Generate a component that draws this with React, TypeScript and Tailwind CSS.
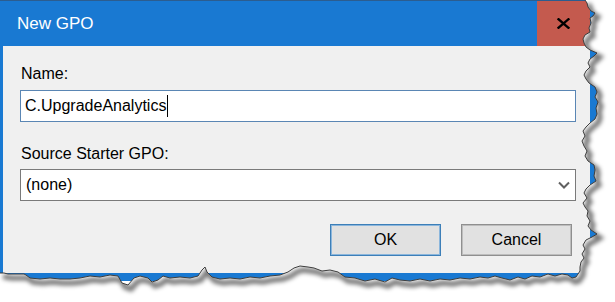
import React from 'react';

// torn-paper edge, traced by eye from the screenshot
const rightEdge: [number, number][] = [
  [585, 0], [587, 3], [588, 7], [591, 11], [595, 13], [593, 16], [590, 18], [591, 23], [589, 28], [590, 32],
  [585, 35], [583, 39], [584, 43], [586, 47], [590, 50], [597, 53], [594, 56], [590, 59], [588, 63], [590, 67],
  [586, 71], [584, 75], [586, 79], [589, 83], [595, 87], [597, 92], [595, 97], [598, 102], [596, 108], [597, 114],
  [595, 119], [590, 123], [586, 127], [583, 131], [585, 136], [582, 141], [584, 146], [587, 151], [585, 156], [588, 161],
  [594, 165], [595, 170], [594, 176], [596, 181], [590, 185], [586, 189], [584, 193], [587, 198], [583, 203], [585, 207],
  [588, 211], [587, 216], [590, 221], [588, 226], [591, 230], [597, 234], [592, 237], [586, 240], [583, 245], [585, 249],
  [582, 254], [584, 258], [581, 262], [580, 267], [580, 271],
];

const bottomEdge: [number, number][] = [
  [578, 274], [576, 277], [572, 278], [568, 275], [562, 274], [555, 276], [548, 274], [540, 277], [532, 276], [525, 279],
  [518, 277], [510, 280], [502, 278], [495, 276], [488, 278], [480, 277], [470, 279], [460, 278], [450, 280], [440, 279],
  [430, 281], [420, 279], [410, 281], [400, 280], [392, 278], [385, 282], [375, 279], [365, 281], [355, 278], [345, 277],
  [338, 272], [330, 270], [322, 271], [314, 268], [308, 267], [300, 266], [294, 268], [288, 272], [280, 275], [270, 276],
  [260, 278], [250, 277], [240, 279], [230, 278], [220, 279], [212, 277], [207, 272], [205, 267], [202, 270], [198, 276],
  [190, 278], [180, 277], [170, 278], [163, 276], [158, 280], [152, 282], [148, 278], [140, 276], [134, 278], [128, 285],
  [122, 283], [118, 276], [110, 275], [100, 277], [90, 276], [80, 278], [70, 279], [60, 279], [50, 278], [40, 279],
  [30, 278], [26, 275], [24, 274], [15, 274], [8, 274], [4, 273], [0, 273],
];

const tearPts = [...rightEdge, ...bottomEdge].map(([x, y]) => `${x},${y}`).join(' ');
const outsidePts = `${tearPts} 0,302 615,302 615,0`;

const TornEdge: React.FC = () => (
  <svg className="pointer-events-none absolute inset-0" width={615} height={302} viewBox="0 0 615 302">
    <defs>
      <clipPath id="outside">
        <polygon points={outsidePts} />
      </clipPath>
      <filter id="blur" x="-10%" y="-10%" width="120%" height="120%">
        <feGaussianBlur stdDeviation="2.2" />
      </filter>
    </defs>
    <polygon points={outsidePts} fill="#ffffff" />
    <g clipPath="url(#outside)">
      <polyline
        points={tearPts}
        transform="translate(3 4)"
        fill="none"
        stroke="#000"
        strokeOpacity={0.55}
        strokeWidth={5}
        filter="url(#blur)"
      />
    </g>
    <polyline points={tearPts} fill="none" stroke="#3d3d3d" strokeWidth={1} />
  </svg>
);

export default function App() {
  return (
    <div className="relative h-[302px] w-[615px] overflow-hidden bg-white font-['Liberation_Sans',Arial,sans-serif]">
      <div className="flex h-[281px] w-[598px] flex-col bg-[#1979d2]">
        {/* Title bar */}
        <div className="flex h-[46px] items-center border-t border-[#2c5d8f]">
          <span className="pl-[17px] text-[17px] text-white">New GPO</span>
          <div className="ml-auto mr-[8px] flex h-full w-[53px] items-center justify-center bg-[#c45a4e]">
            <svg width="13" height="11" viewBox="0 0 13 11">
              <path d="M1.5 1.2 L11.5 9.8 M11.5 1.2 L1.5 9.8" stroke="#000" strokeWidth={2.3} strokeLinecap="square" />
            </svg>
          </div>
        </div>

        {/* Body */}
        <div className="mb-[8px] ml-[3px] mr-[8px] flex flex-1 flex-col bg-[#f0f0f0] pl-[17px] pr-[14px] pt-[19px] text-[16px] leading-[18px] text-black">
          <label className="pl-[1px]">Name:</label>
          <div className="mt-[7px] flex h-[32px] items-center border border-[#5a86b4] bg-white pl-[4px]">
            <span>C.UpgradeAnalytics</span>
            <span className="ml-[1px] inline-block h-[22px] w-px bg-black" />
          </div>

          <label className="mt-[23px] pl-[1px]">Source Starter GPO:</label>
          <div className="mt-[6px] flex h-[32px] items-center justify-between border border-[#7a7a7a] bg-white pl-[5px] pr-[5px]">
            <span>(none)</span>
            <svg width="12" height="8" viewBox="0 0 12 8">
              <polyline points="1,1.5 6,6.5 11,1.5" fill="none" stroke="#606060" strokeWidth={2} />
            </svg>
          </div>

          <div className="mt-[23px] flex justify-end gap-[20px] pr-[4px]">
            <button className="h-[32px] w-[111px] border border-[#3d7fb8] bg-[#e1e1e1] shadow-[inset_0_0_0_1px_#8bb6dc]">
              OK
            </button>
            <button className="h-[32px] w-[111px] border border-[#8f8f8f] bg-[#e1e1e1] shadow-[inset_0_0_0_1px_#bdbdbd]">
              Cancel
            </button>
          </div>
        </div>
      </div>
      <TornEdge />
    </div>
  );
}
